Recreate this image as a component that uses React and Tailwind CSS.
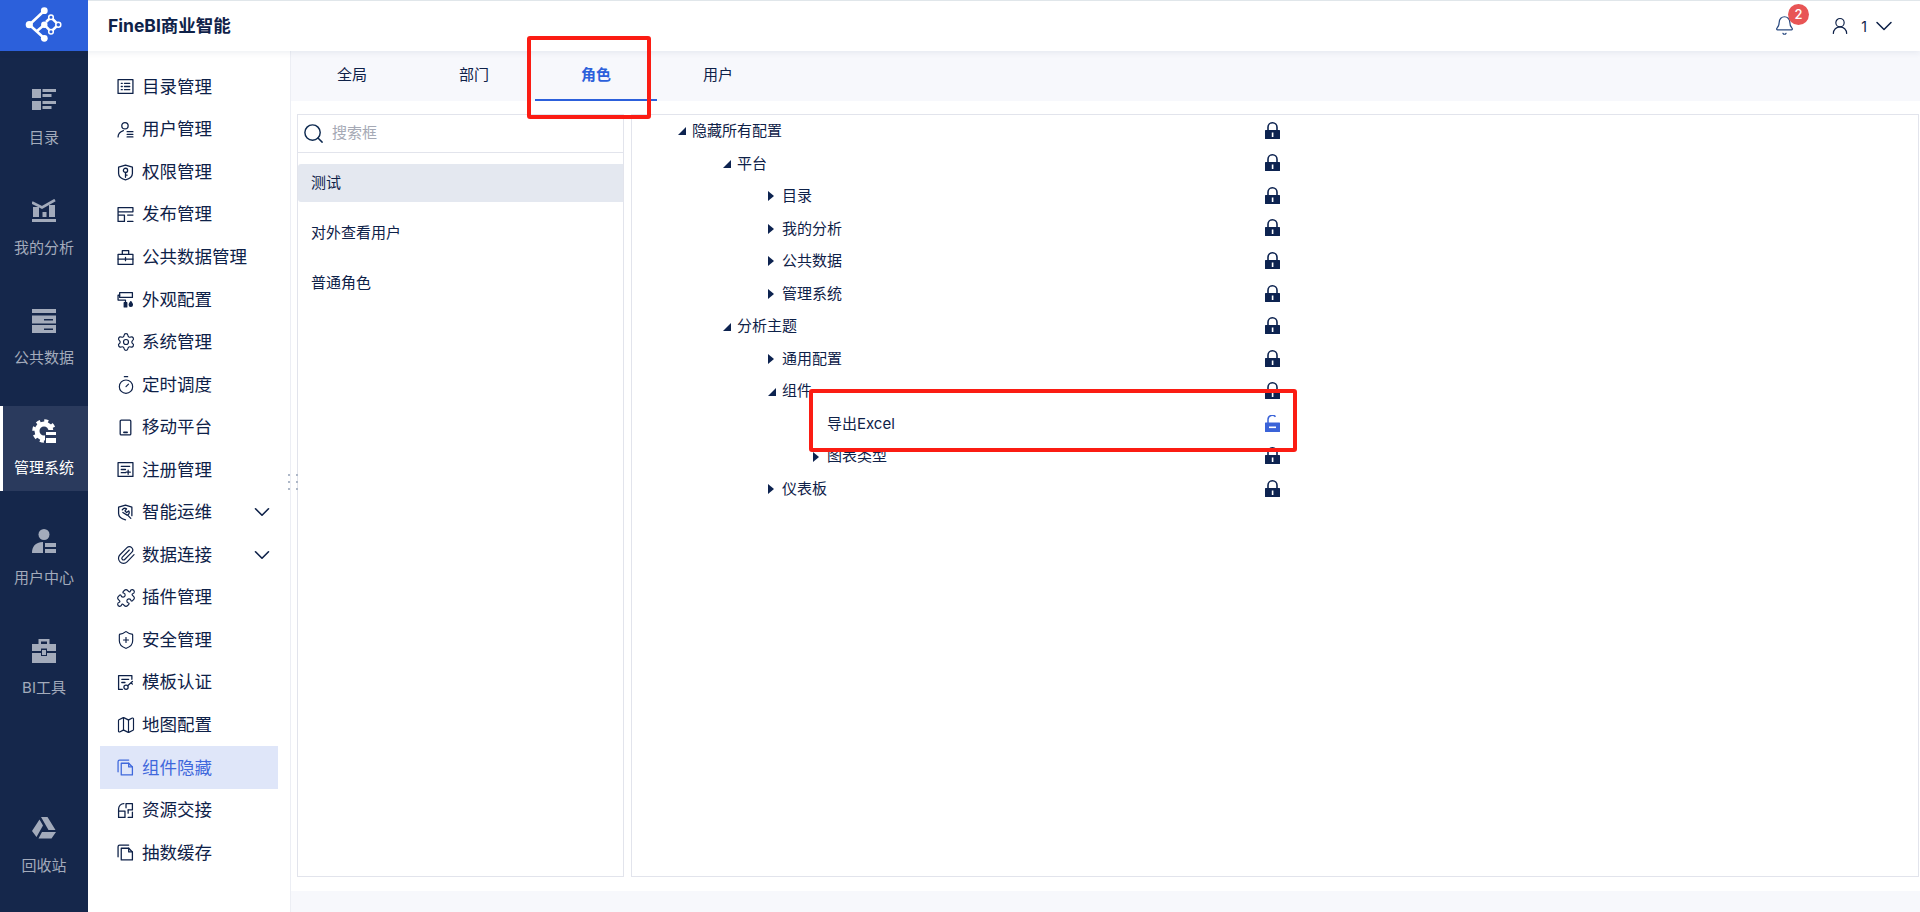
import React from "react";
import { Settings, Timer, Paperclip, Puzzle, ShieldPlus, Map as MapIcon, ChevronDown, Bell, UserRound, Search } from "lucide-react";

const S = ({ children }) => (
  <svg width="17" height="17" viewBox="0 0 16 16" fill="none" stroke="currentColor" strokeWidth="1.2" strokeLinejoin="round" strokeLinecap="round">{children}</svg>
);
const L = (I) => () => <I size={20} strokeWidth={1.4} className="shrink-0" />;
const CopyI = () => (
  <S><path d="M1 12V2.500A1.500 1.500 0 0 1 2.500 1H11" /><path d="M4 4h7l3.500 3.500V15H4z" /><path d="M11 4v3.500h3.500" /></S>
);
const menu = [
  ["目录管理", () => <S><rect x="1" y="1.500" width="14" height="13" /><path d="M4 5h1M7 5h5M4 8h1M7 8h5M4 11h1M7 11h5" /></S>],
  ["用户管理", () => <S><circle cx="7.500" cy="4.500" r="3" /><path d="M1 15c0-3 2-5 5-6" /><path d="M9.500 10H15M9.500 12.500H15M9.500 15H15" /></S>],
  ["权限管理", () => <S><path d="M8 1l6.500 2v6c0 3-3 5-6.500 6-3.500-1-6.500-3-6.500-6V3z" /><circle cx="8" cy="6" r="2" /><path d="M8 8v4.500M8 10.500h1.500" /></S>],
  ["发布管理", () => <S><path d="M1 1.500h14v4H1zM1 8.500h6v6H1zM10 8.500h5M10 14.500h5M1 5.500v3" /></S>],
  ["公共数据管理", () => <S><rect x="1" y="5" width="14" height="9.500" /><path d="M5 5V1.500h6V5M1 9.500h14M8 8v3" /></S>],
  ["外观配置", () => <S><rect x="2.500" y="1.500" width="12" height="4.500" /><path d="M2.500 4H1v4.500h7V11" /><rect x="6.800" y="11" width="2.400" height="4" fill="currentColor" /><path d="M13 10c1 1.500 1.500 2 1.500 3a1.500 1.500 0 0 1-3 0c0-1 .5-1.500 1.500-3z" fill="currentColor" /></S>],
  ["系统管理", L(Settings)],
  ["定时调度", L(Timer)],
  ["移动平台", () => <S><rect x="3" y="1" width="10" height="14" rx="1" /><path d="M6.500 12.500h3" strokeWidth="1.600" /></S>],
  ["注册管理", () => <S><rect x="1" y="1.500" width="14" height="13" /><path d="M4 5h8M4 8h4M4 11h4M10.500 8.500v4M8.500 10.500h4" /></S>],
  ["智能运维", () => <S><path d="M14 11V3L8 1 1.500 3v6c0 3 3 5 6.500 6" /><path d="M5 5.500a3 3 0 0 1 4-1L7.500 6.500l1.500 1.500 2-1.500a3 3 0 0 1-1 4l3 3" /><path d="M9.500 10.500L5.500 8" /></S>],
  ["数据连接", L(Paperclip)],
  ["插件管理", L(Puzzle)],
  ["安全管理", L(ShieldPlus)],
  ["模板认证", () => <S><path d="M14 5V1.500H1.500v13H5" /><path d="M4.500 5h6.500M4.500 8h3" /><circle cx="8.500" cy="12.500" r="2" /><path d="M10 11l4.500-4M13 8.500l1.500 1" /></S>],
  ["地图配置", L(MapIcon)],
  ["组件隐藏", CopyI],
  ["资源交接", () => <S><path d="M8.500 1.500h6v6h-4M1.500 8.500h6v6h-6zM8.500 1.500v4M1.500 8.500v-2a5 5 0 0 1 5-5" /><path d="M10.500 7.500v3M14.500 9.500v5h-4" /></S>],
  ["抽数缓存", CopyI],
];

const side = {
  目录: <path d="M0 0h9v9H0zM0 12h9v9H0zM10.500 0H24v3H10.500zM10.500 5h9v3h-9zM10.500 12H24v3H10.500zM10.500 17h9v3h-9z" />,
  我的分析: <g><path d="M0 20h24v3H0zM1 8h6v10H1zM10.500 13h4v5h-4zM17 6h6v12h-6z" /><path d="M0 3.500l10 5L23 1" fill="none" stroke="currentColor" strokeWidth="2.600" /></g>,
  公共数据: <g><path d="M0 0h24v4H0zM0 6.500h24v8H0zM0 16h24v8H0z" /><path d="M12 10h9v1.600h-9zM12 19.500h9v1.600h-9z" fill="#15274b" /></g>,
  管理系统: (
    <g>
      <circle cx="12" cy="12" r="7" fill="none" stroke="currentColor" strokeWidth="5" />
      <circle cx="12" cy="12" r="10.300" fill="none" stroke="currentColor" strokeWidth="3" strokeDasharray="4.040 4.040" />
      <rect x="13" y="11" width="11" height="13" fill="#2a3a5d" />
      <path d="M14 13h10v3H14zM14 19h10v5H14z" />
    </g>
  ),
  用户中心: <g><circle cx="12" cy="5.500" r="5.500" /><path d="M0 24c0-6 3-11 11-11v11zM13 14h11v4H13zM13 20h11v4H13z" /></g>,
  BI工具: <g><path fillRule="evenodd" d="M6.500 5V0h11v5H24v7H15V9.500H9V12H0V5zM9 2.500V5h6V2.500zM0 14h9v3h6v-3h9v10H0z" /><path d="M10 11h4v5h-4z" /></g>,
  回收站: <path d="M9 0h6.500l8 13h-7zM7.500 2.500L11 8.500 4.500 20 0 14zM6.500 21.500L10 15h14l-4.500 6.500z" />,
};
const sideItems = ["目录", "我的分析", "公共数据", "管理系统", "用户中心", "BI工具"];

const SideItem = ({ name, active, className = "" }) => (
  <div className={`h-[85px] w-[88px] flex flex-col items-center border-l-[3px] ${active ? "border-white bg-[#2a3a5d] text-white" : "border-transparent text-[#a3abbb]"} ${className}`}>
    <svg className="mt-[13px] shrink-0 -ml-[3px]" width="24" height="24" viewBox="0 0 24 24" fill="currentColor">{side[name]}</svg>
    <div className="mt-[15px] h-5 leading-5 text-[15px] -ml-[3px] whitespace-nowrap">{name}</div>
  </div>
);

const tree = [
  [0, "down", "隐藏所有配置"],
  [1, "down", "平台"],
  [2, "right", "目录"],
  [2, "right", "我的分析"],
  [2, "right", "公共数据"],
  [2, "right", "管理系统"],
  [1, "down", "分析主题"],
  [2, "right", "通用配置"],
  [2, "down", "组件"],
  [3, "none", "导出Excel", true],
  [3, "right", "图表类型"],
  [2, "right", "仪表板"],
];
const indent = ["pl-[46px]", "pl-[91px]", "pl-[136px]", "pl-[181px]"];

const Caret = ({ type }) => (
  <span className="w-[14px] shrink-0 flex items-center">
    {type === "down" && <svg width="8" height="8" viewBox="0 0 7 7"><path d="M7 0v7H0z" fill="#0d2350" /></svg>}
    {type === "right" && <svg width="6" height="10" viewBox="0 0 6 10"><path d="M0 0l6 5-6 5z" fill="#0d2350" /></svg>}
  </span>
);
const Lock = ({ open }) =>
  open ? (
    <svg width="15" height="17" viewBox="0 0 15 17">
      <path d="M3 9V4.500a4.300 4.300 0 0 1 7.500-2.800" fill="none" stroke="#3a63d8" strokeWidth="1.500" />
      <rect y="7.500" width="15" height="9.500" rx=".5" fill="#3a63d8" />
      <rect x="4" y="11.500" width="7" height="1.600" fill="#fff" />
    </svg>
  ) : (
    <svg width="15" height="17" viewBox="0 0 15 17">
      <path d="M3 9V5.300a4.500 4.500 0 0 1 9 0V9" fill="none" stroke="#0d2350" strokeWidth="1.600" />
      <rect y="8" width="15" height="9" rx=".5" fill="#0d2350" />
      <rect x="6.800" y="10.500" width="1.600" height="4.500" fill="#fff" />
    </svg>
  );

export default function App() {
  return (
    <div className="relative h-screen w-full overflow-hidden flex flex-col bg-white text-[#0e2148] font-['Inter','Noto_Sans_CJK_SC',sans-serif]">
      <header className="relative z-10 h-[51px] shrink-0 flex items-center bg-white border-t border-[#e0e6ea] shadow-[0_2px_6px_rgba(20,40,80,0.07)]">
        <div className="w-[88px] h-[51px] -mt-px bg-[#2c60db] flex items-center justify-center">
          <svg className="ml-[3px] mt-px" width="50" height="45" viewBox="0 0 50 45" fill="none" stroke="#fff">
            <path d="M23.300 6.700L8.300 20.700L23.300 34.300M15.500 27.500L23.300 20.700L30 27.700L37.300 20.700L30 13.300L25 18" strokeWidth="2.600" />
            <g fill="#fff" stroke="none">
              <circle cx="23.300" cy="6.700" r="3.400" /><circle cx="8.300" cy="20.700" r="3.600" /><circle cx="23.300" cy="20.700" r="3.200" /><circle cx="23.300" cy="34.300" r="3.400" />
            </g>
            <g fill="#2c60db" strokeWidth="1.500">
              <circle cx="30" cy="13.300" r="2.300" /><circle cx="37.300" cy="20.700" r="2.500" /><circle cx="30" cy="27.700" r="2.300" />
            </g>
          </svg>
        </div>
        <div className="ml-5 text-[17.500px] font-bold mt-[1px]">FineBI商业智能</div>
        <div className="ml-auto flex items-center h-full">
          <div className="relative mr-[35px] -mt-px">
            <Bell size={21} strokeWidth={1.4} className="text-[#2a4a80]" />
            <span className="absolute -top-[11px] left-[14px] w-[21px] h-[21px] rounded-full bg-[#e85555] text-white text-[13px] leading-[21px] text-center font-medium">2</span>
          </div>
          <UserRound size={20} strokeWidth={1.4} className="text-[#0e2148]" />
          <span className="ml-[10px] w-2 text-center text-[14px]">1</span>
          <ChevronDown size={28} strokeWidth={1.3} className="ml-[2px] mr-[22px]" />
        </div>
      </header>

      <div className="flex-1 flex min-h-0">
        <aside className="w-[88px] shrink-0 bg-[#15274b] flex flex-col pt-[25px] gap-[25px] pb-[23px]">
          {sideItems.map((n) => (
            <SideItem key={n} name={n} active={n === "管理系统"} />
          ))}
          <SideItem name="回收站" className="mt-auto" />
        </aside>

        <nav className="relative w-[203px] shrink-0 bg-white border-r border-[#eceef4] pt-[14.700px] pl-[12px]">
          {menu.map(([name, Icon]) => {
            const active = name === "组件隐藏";
            const hasArrow = name === "智能运维" || name === "数据连接";
            return (
              <div key={name} className={`h-[42.550px] w-[178px] flex items-center pl-[17px] pr-[3px] ${active ? "bg-[#dfe6f9] text-[#3f68dc]" : ""}`}>
                <span className="w-[17px] h-[17px] flex items-center justify-center shrink-0"><Icon /></span>
                <span className="ml-[8px] text-[17.500px] whitespace-nowrap">{name}</span>
                {hasArrow && <ChevronDown size={26} strokeWidth={1.5} className="ml-auto shrink-0" />}
              </div>
            );
          })}
          <div className="absolute top-[423px] -right-[8px] grid grid-cols-2 gap-x-[6px] gap-y-[5px]">
            {[0, 1, 2, 3, 4, 5].map((i) => (
              <span key={i} className="w-[2px] h-[2px] bg-[#aeb8c8]" />
            ))}
          </div>
        </nav>

        <main className="flex-1 min-w-0 flex flex-col">
          <div className="h-[50px] shrink-0 flex bg-[#f7f8fc]">
            {["全局", "部门", "角色", "用户"].map((t) => (
              <div key={t} className={`w-[122px] flex items-center justify-center text-[15px] border-b-2 ${t === "角色" ? "border-[#2c60db] text-[#2c60db] font-bold" : "border-transparent"}`}>
                {t}
              </div>
            ))}
          </div>
          <div className="flex-1 min-h-0 bg-white flex gap-[7px] pl-[6px] pr-px pt-[13px] pb-[14px]">
            <section className="w-[327px] shrink-0 border border-[#e2e4ec]">
              <div className="h-[38px] flex items-center pl-[4px] border-b border-[#e2e4ec]">
                <Search size={23} strokeWidth={1.5} className="text-[#0e2a50]" />
                <span className="ml-[7px] text-[15px] text-[#a5a9b5]">搜索框</span>
              </div>
              <div className="mt-[11px] flex flex-col gap-[12px] text-[15px]">
                {["测试", "对外查看用户", "普通角色"].map((n, i) => (
                  <div key={n} className={`h-[38px] flex items-center pl-[13px] ${i === 0 ? "bg-[#e4e8f0] rounded-l-[3px]" : ""}`}>{n}</div>
                ))}
              </div>
            </section>
            <section className="flex-1 min-w-0 border border-[#e2e4ec]">
              {tree.map(([lv, caret, text, open]) => (
                <div key={text} className={`h-[32.550px] w-[648px] flex items-center text-[15px] ${indent[lv]}`}>
                  <Caret type={caret} />
                  <span className="whitespace-nowrap">{text}</span>
                  <span className="ml-auto flex -mt-[2px]"><Lock open={open} /></span>
                </div>
              ))}
            </section>
          </div>
          <div className="h-[21px] shrink-0 bg-[#f7f8fc]" />
        </main>
      </div>

      <div className="absolute z-20 left-[527px] top-[36px] w-[124px] h-[83px] border-4 border-[#fb1c13] rounded-[3px]" />
      <div className="absolute z-20 left-[809px] top-[389px] w-[488px] h-[63px] border-4 border-[#fb1c13] rounded-[3px]" />
    </div>
  );
}
